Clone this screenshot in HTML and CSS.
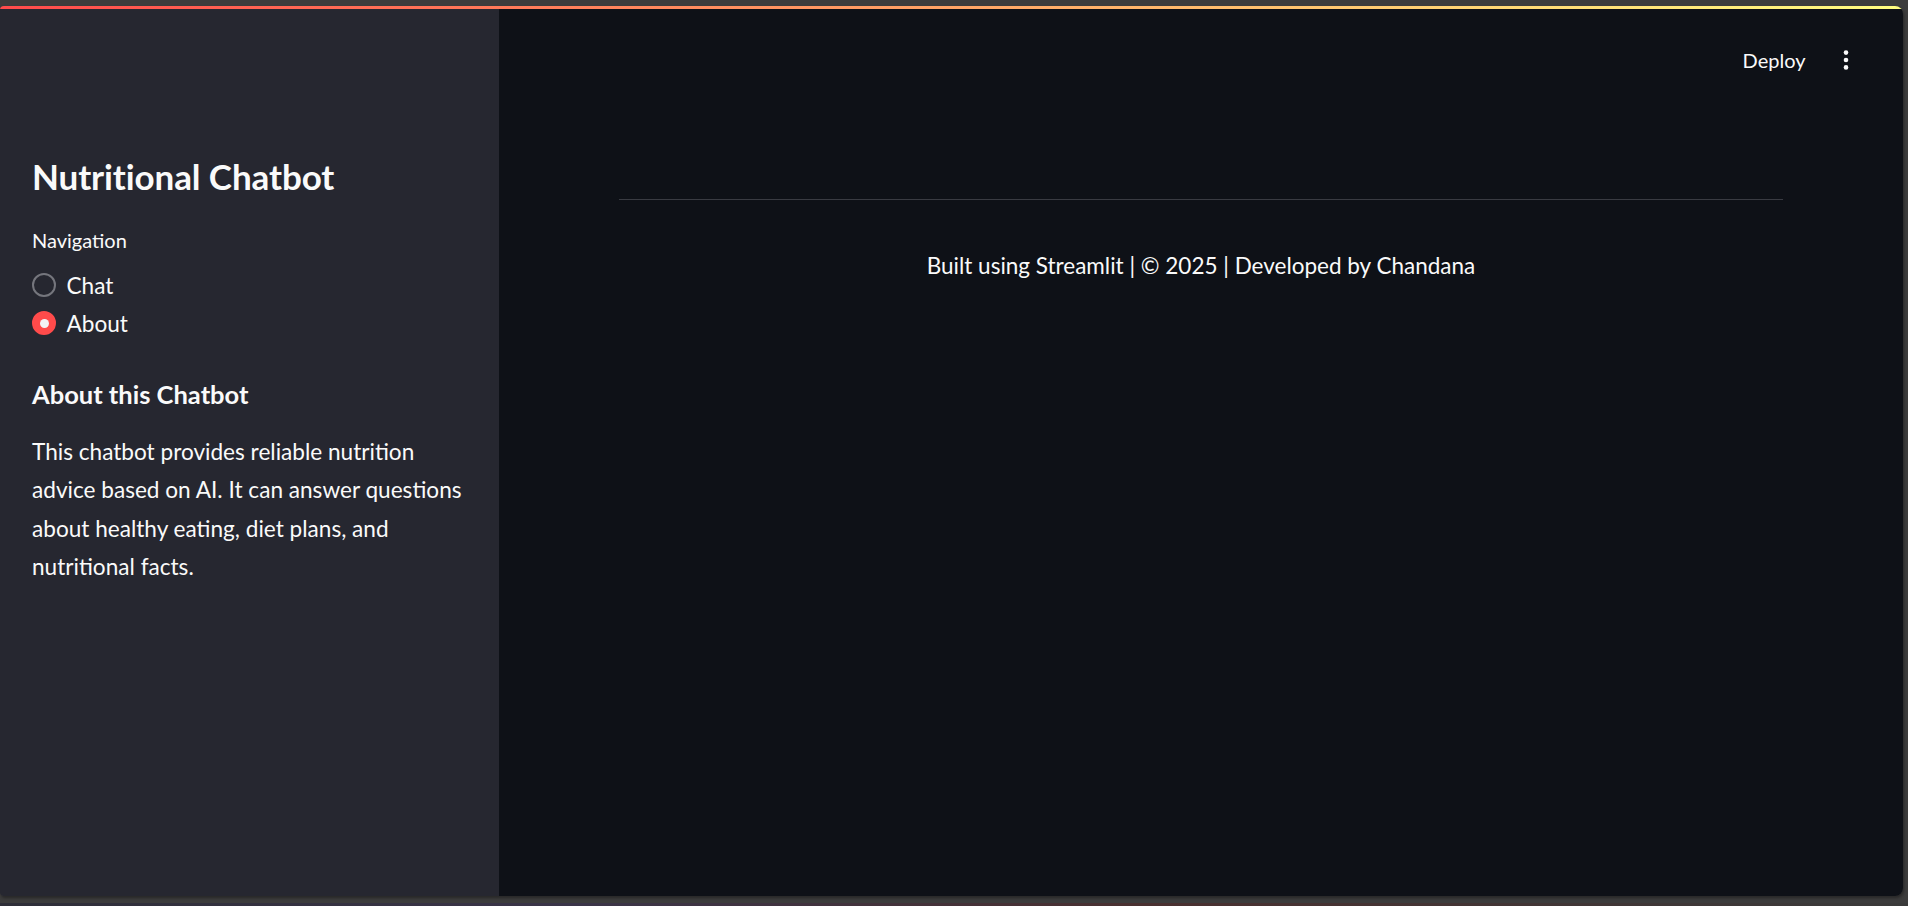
FILE: index.html
```html
<!DOCTYPE html>
<html lang="en">
<head>
<meta charset="utf-8">
<title>Nutritional Chatbot</title>
<link rel="stylesheet" href="styles.css">
</head>
<body>
<div class="window">
  <div class="decoration"></div>
  <div class="app">
    <aside class="sidebar">
      <h1 class="side-title">Nutritional Chatbot</h1>
      <div class="nav-label">Navigation</div>
      <div class="radio-group">
        <label class="radio">
          <span class="radio-dot"></span>
          <span class="radio-text">Chat</span>
        </label>
        <label class="radio radio-checked">
          <span class="radio-dot"></span>
          <span class="radio-text">About</span>
        </label>
      </div>
      <h3 class="side-sub">About this Chatbot</h3>
      <p class="side-text">This chatbot provides reliable nutrition advice based on AI. It can answer questions about healthy eating, diet plans, and nutritional facts.</p>
    </aside>
    <main class="main">
      <header class="topbar">
        <span class="deploy">Deploy</span>
        <span class="menu">
          <svg width="24" height="24" viewBox="0 0 24 24"><circle cx="12" cy="4.6" r="2.3" fill="#fafafa"/><circle cx="12" cy="12" r="2.3" fill="#fafafa"/><circle cx="12" cy="19.4" r="2.3" fill="#fafafa"/></svg>
        </span>
      </header>
      <section class="content">
        <hr class="divider">
        <p class="footer">Built using Streamlit | © 2025 | Developed by Chandana</p>
      </section>
    </main>
  </div>
</div>
<div class="taskbar"></div>
</body>
</html>
```

FILE: styles.css
```css
* { box-sizing: border-box; }
html, body {
  margin: 0;
  padding: 0;
}
body {
  width: 1908px;
  height: 906px;
  overflow: hidden;
  background: #3c3c3c;
  font-family: Lato, "Noto Sans", sans-serif;
  color: #fafafa;
}
.window {
  margin-top: 6px;
  width: 1903px;
  height: 890px;
  border-radius: 4px 8px 8px 4px;
  overflow: hidden;
  display: flex;
  flex-direction: column;
  box-shadow: 1px 2px 3px rgba(0,0,0,0.35);
}
.decoration {
  height: 3px;
  flex: none;
  background: linear-gradient(90deg, rgb(255,75,75), rgb(255,253,128));
}
.app {
  flex: 1;
  display: flex;
}
.sidebar {
  width: 499px;
  flex: none;
  background: #262730;
  padding: 145px 28px 0 32px;
}
.side-title {
  margin: 0;
  font-size: 35px;
  line-height: 44px;
  font-weight: 700;
  letter-spacing: -0.1px;
}
.nav-label {
  margin-top: 28px;
  font-size: 20px;
  line-height: 28px;
}
.radio-group {
  margin-top: 12px;
  display: flex;
  flex-direction: column;
}
.radio {
  height: 38px;
  display: flex;
  align-items: center;
  gap: 10.5px;
  font-size: 22.6px;
}
.radio-dot {
  width: 24px;
  height: 24px;
  border-radius: 50%;
  border: 2px solid #75767d;
  flex: none;
  display: flex;
  align-items: center;
  justify-content: center;
}
.radio-checked .radio-dot {
  background: #ff4b4b;
  border-color: #ff4b4b;
}
.radio-checked .radio-dot::after {
  content: "";
  width: 9px;
  height: 9px;
  border-radius: 50%;
  background: #f3f3f6;
}
.side-sub {
  margin: 36px 0 0 0;
  font-size: 25.5px;
  line-height: 32px;
  font-weight: 700;
}
.side-text {
  margin: 23px 0 0 0;
  font-size: 22.6px;
  line-height: 38.4px;
}
.main {
  flex: 1;
  background: #0e1117;
  display: flex;
  flex-direction: column;
}
.topbar {
  display: flex;
  justify-content: flex-end;
  align-items: center;
  height: 28px;
  margin-top: 37px;
  padding-right: 45px;
  gap: 28.5px;
}
.deploy {
  font-size: 20px;
  line-height: 28px;
}
.menu {
  display: flex;
  width: 24px;
  height: 24px;
}
.content {
  width: 1164px;
  margin: 0 auto;
}
.divider {
  margin: 125px 0 0 0;
  border: none;
  height: 1px;
  background: #393b42;
}
.footer {
  margin: 50px 0 0 0;
  text-align: center;
  font-size: 22.5px;
  line-height: 32px;
}
.taskbar {
  position: absolute;
  left: 0;
  bottom: 0;
  width: 1908px;
  height: 3px;
  background: linear-gradient(90deg, #2e2e38, #3a3448 30%, #4a3030 60%, #3a3a3a);
}
```
